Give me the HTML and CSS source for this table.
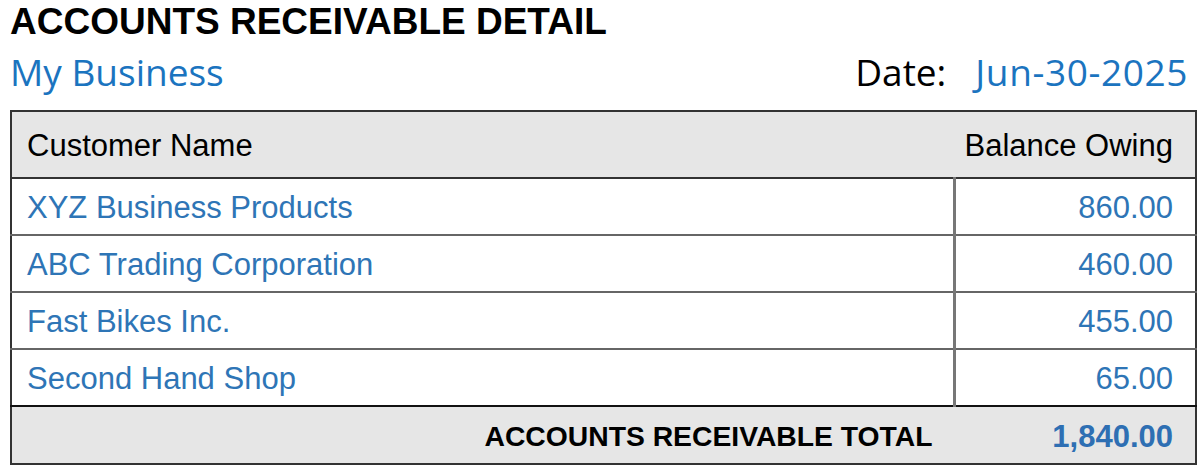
FILE: index.html
```html
<!DOCTYPE html>
<html>
<head>
<meta charset="utf-8">
<link rel="stylesheet" href="styles.css">
</head>
<body>
<div class="report">
  <h1 class="title">ACCOUNTS RECEIVABLE DETAIL</h1>
  <div class="subhead">
    <span class="biz">My Business</span>
    <div class="date">
      <span class="date-label">Date:</span>
      <span class="date-value">Jun-30-2025</span>
    </div>
  </div>
  <table class="ar">
    <thead>
      <tr class="head-row">
        <th class="col-name">Customer Name</th>
        <th class="col-amt">Balance Owing</th>
      </tr>
    </thead>
    <tbody>
      <tr class="row"><td class="col-name">XYZ Business Products</td><td class="col-amt">860.00</td></tr>
      <tr class="row"><td class="col-name">ABC Trading Corporation</td><td class="col-amt">460.00</td></tr>
      <tr class="row"><td class="col-name">Fast Bikes Inc.</td><td class="col-amt">455.00</td></tr>
      <tr class="row"><td class="col-name">Second Hand Shop</td><td class="col-amt">65.00</td></tr>
    </tbody>
    <tfoot>
      <tr class="total-row">
        <td class="total-label">ACCOUNTS RECEIVABLE TOTAL</td>
        <td class="total-amt">1,840.00</td>
      </tr>
    </tfoot>
  </table>
</div>
</body>
</html>
```

FILE: styles.css
```css
html, body {
  margin: 0;
  padding: 0;
  background: #ffffff;
}

.report {
  width: 1187px;
  padding-left: 10px;
  font-family: "Liberation Sans", Arial, sans-serif;
}

.title {
  margin: 0;
  padding-top: 2px;
  font-size: 37px;
  line-height: 40px;
  font-weight: bold;
  color: #000;
}

.subhead {
  display: flex;
  justify-content: space-between;
  align-items: baseline;
  height: 68px;
  font-family: "Open Sans", "Noto Sans", sans-serif;
  font-size: 37px;
  line-height: 60px;
}

.biz {
  color: #1b74bf;
}

.date {
  display: flex;
  gap: 29px;
  padding-right: 9px;
}

.date-label {
  color: #000;
}

.date-value {
  color: #1b74bf;
  letter-spacing: 0.6px;
}

.ar {
  width: 1187px;
  border-collapse: collapse;
  border: 2px solid #333;
  font-size: 31px;
}

.ar th, .ar td {
  padding: 3px 0 0 0;
}

.head-row {
  background: #e6e6e6;
  height: 67px;
  border-bottom: 2px solid #333;
}

.head-row th {
  font-weight: normal;
  color: #000;
}

.col-name {
  text-align: left;
  padding-left: 15px !important;
  color: #2e75b6;
}

.col-amt {
  text-align: right;
  width: 217px;
  padding-right: 22px !important;
  color: #2e75b6;
}

.row {
  height: 57px;
  border-bottom: 2px solid #666;
}

.row .col-amt {
  border-left: 3px solid #777;
}

.row:last-child {
  border-bottom: 2px solid #111;
}

.total-row {
  background: #e6e6e6;
  height: 58px;
  font-weight: bold;
}

.total-label {
  text-align: right;
  font-size: 28.3px;
  color: #000;
  padding-right: 22px !important;
}

.total-amt {
  text-align: right;
  padding-right: 22px !important;
  color: #2e6fb3;
}
```
